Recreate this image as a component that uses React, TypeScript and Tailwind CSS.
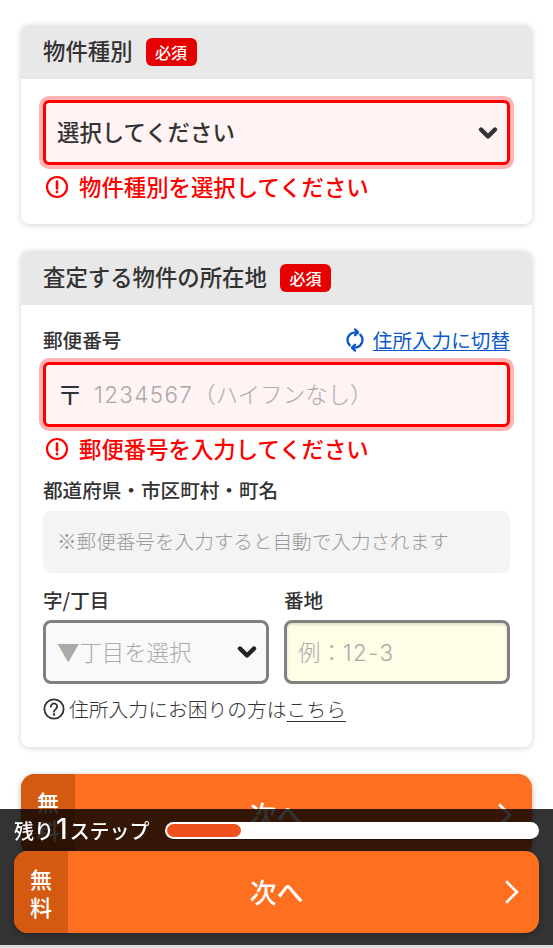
import { ChevronDown, RefreshCw } from "lucide-react";

const font = { fontFamily: '"Noto Sans CJK JP", "Noto Sans", sans-serif' };
const digits = { fontFamily: 'Inter, "Noto Sans CJK JP", sans-serif' };

function Badge() {
  return (
    <span className="flex h-[28px] w-[51px] items-center justify-center rounded-[6px] bg-[#e60000] pb-[1px] text-[16px] font-medium text-white">
      必須
    </span>
  );
}

function CardHead({ title }: { title: string }) {
  return (
    <div className="flex h-[54px] items-center gap-[13px] bg-[#e8e8e8] px-[22px]">
      <h2 className="pb-[2px] text-[22.4px] font-medium text-[#333]">{title}</h2>
      <Badge />
    </div>
  );
}

function ErrorLine({ text }: { text: string }) {
  return (
    <div className="flex h-[32px] items-center gap-[10px] pl-[2px] text-[22.4px] font-medium text-[#f00]">
      <svg viewBox="0 0 24 24" className="h-[24px] w-[24px]" fill="none" stroke="currentColor" strokeWidth="2.2">
        <circle cx="12" cy="12" r="10" />
        <path d="M12 6.5v7" strokeWidth="2.6" strokeLinecap="round" />
        <circle cx="12" cy="17" r="1.4" fill="currentColor" stroke="none" />
      </svg>
      <span className="pb-[1px]">{text}</span>
    </div>
  );
}

function NextButton() {
  return (
    <button className="flex h-[82px] w-full shrink-0 overflow-hidden rounded-[14px] bg-[#ff6f20] text-white shadow-[0_2px_6px_rgba(0,0,0,0.3)]">
      <span className="flex h-full w-[54px] shrink-0 flex-col items-center justify-center bg-[#d45a12] text-[22px] font-medium leading-[28px]">
        <span>無</span>
        <span>料</span>
      </span>
      <span className="relative flex flex-1 items-center justify-center pr-[54px] text-[27px] font-medium">
        次へ
        <svg viewBox="0 0 16 28" className="absolute right-[20px] top-1/2 h-[25px] w-[15px] -translate-y-1/2" fill="none" stroke="currentColor" strokeWidth="3">
          <path d="M2 2l12 12L2 26" />
        </svg>
      </span>
    </button>
  );
}

export default function App() {
  return (
    <div className="relative h-[948px] overflow-hidden bg-white" style={font}>
      <div className="flex flex-col px-[21px] pt-[25px]">
        <section className="h-[199px] overflow-hidden rounded-[8px] bg-white shadow-[0_1px_6px_rgba(0,0,0,0.18)]">
          <CardHead title="物件種別" />
          <div className="px-[22px] pt-[21px]">
            <div className="flex h-[65px] items-center justify-between rounded-[6px] border-[3px] border-[#f00] bg-[#fff3f3] pl-[11px] pr-[5px] shadow-[0_0_0_4px_#ffb3b3]">
              <span className="pb-[2px] text-[22.4px] font-medium text-[#333]">選択してください</span>
              <ChevronDown className="h-[28px] w-[28px] text-[#333]" strokeWidth={3.8} />
            </div>
            <div className="mt-[6px]">
              <ErrorLine text="物件種別を選択してください" />
            </div>
          </div>
        </section>

        <section className="mt-[27px] h-[496px] overflow-hidden rounded-[8px] bg-white shadow-[0_1px_6px_rgba(0,0,0,0.18)]">
          <CardHead title="査定する物件の所在地" />
          <div className="px-[22px]">
            <div className="flex h-[57px] items-end justify-between pb-[8px]">
              <span className="text-[19.6px] font-medium leading-[28px] text-[#333]">郵便番号</span>
              <a className="flex items-center gap-[8px] text-[19.6px] leading-[28px] text-[#0b57c9]">
                <RefreshCw className="h-[20px] w-[20px] -rotate-45" strokeWidth={2.8} />
                <span className="underline underline-offset-2">住所入力に切替</span>
              </a>
            </div>
            <div className="flex h-[65px] items-center rounded-[6px] border-[3px] border-[#f00] bg-[#fff3f3] pl-[11px] shadow-[0_0_0_4px_#ffb3b3]">
              <span className="w-[37px] pb-[2px] text-[26px] leading-[32px] text-[#333]">〒</span>
              <span className="text-[22.4px] font-light text-[#a9a9a9]">
                <span className="tracking-[1.4px]" style={digits}>1234567</span>（ハイフンなし）
              </span>
            </div>
            <div className="mt-[6px]">
              <ErrorLine text="郵便番号を入力してください" />
            </div>
            <div className="mt-[11px] text-[19.6px] font-medium leading-[28px] text-[#333]">都道府県・市区町村・町名</div>
            <div className="mt-[7px] flex h-[62px] items-center rounded-[8px] bg-[#f4f4f4] pb-[2px] pl-[14px] text-[19.6px] font-light text-[#999]">
              ※郵便番号を入力すると自動で入力されます
            </div>
            <div className="mt-[13px] grid grid-cols-2 gap-[15px]">
              <div>
                <div className="text-[19.6px] font-medium leading-[28px] text-[#333]">字/丁目</div>
                <div className="mt-[6px] flex h-[64px] items-center justify-between rounded-[8px] border-[3px] border-[#808080] bg-[#f9f9f9] pl-[11px] pr-[5px]">
                  <span className="text-[22.4px] font-light text-[#aaa]">▼丁目を選択</span>
                  <ChevronDown className="h-[28px] w-[28px] text-[#222]" strokeWidth={3.8} />
                </div>
              </div>
              <div>
                <div className="text-[19.6px] font-medium leading-[28px] text-[#333]">番地</div>
                <div className="mt-[6px] flex h-[64px] items-center rounded-[8px] border-[3px] border-[#808080] bg-[#fffde6] pl-[11px] shadow-[inset_0_2px_3px_rgba(0,0,0,0.12)]">
                  <span className="text-[22.4px] font-light text-[#aaa]">
                    例：<span className="tracking-[1.4px]" style={digits}>12-3</span>
                  </span>
                </div>
              </div>
            </div>
            <div className="mt-[11px] flex h-[28px] items-center gap-[4px] text-[19.8px] font-light text-[#333]">
              <svg viewBox="0 0 24 24" className="h-[22px] w-[22px]" fill="none" stroke="currentColor" strokeWidth="2">
                <circle cx="12" cy="12" r="10.5" />
                <path d="M8.6 9.4a3.4 3.4 0 1 1 5.4 2.7c-1.3.9-2 1.5-2 3" strokeLinecap="round" />
                <circle cx="12" cy="18" r="1.3" fill="currentColor" stroke="none" />
              </svg>
              <span className="pb-[1px]">
                住所入力にお困りの方は<span className="underline underline-offset-4">こちら</span>
              </span>
            </div>
          </div>
        </section>

        <div className="mt-[27px]">
          <NextButton />
        </div>
      </div>

      <div className="fixed inset-x-0 bottom-0 flex h-[139px] flex-col">
        <div className="flex h-[136px] flex-col bg-black/80 px-[14px]">
          <div className="flex h-[42px] items-center">
            <div className="flex w-[151px] items-baseline text-[20px] font-medium text-white">
              <span>残り</span>
              <span className="px-[2px] text-[28px] font-medium leading-[28px]" style={digits}>1</span>
              <span>ステップ</span>
            </div>
            <div className="flex h-[17px] flex-1 items-center rounded-full bg-white px-[2px] shadow-[0_1px_1px_rgba(0,0,0,0.4)]">
              <div className="h-[13px] w-[74px] rounded-full bg-[#f0501e]" />
            </div>
          </div>
          <NextButton />
        </div>
        <div className="h-[3px] bg-[#dcdcdc]" />
      </div>
    </div>
  );
}
